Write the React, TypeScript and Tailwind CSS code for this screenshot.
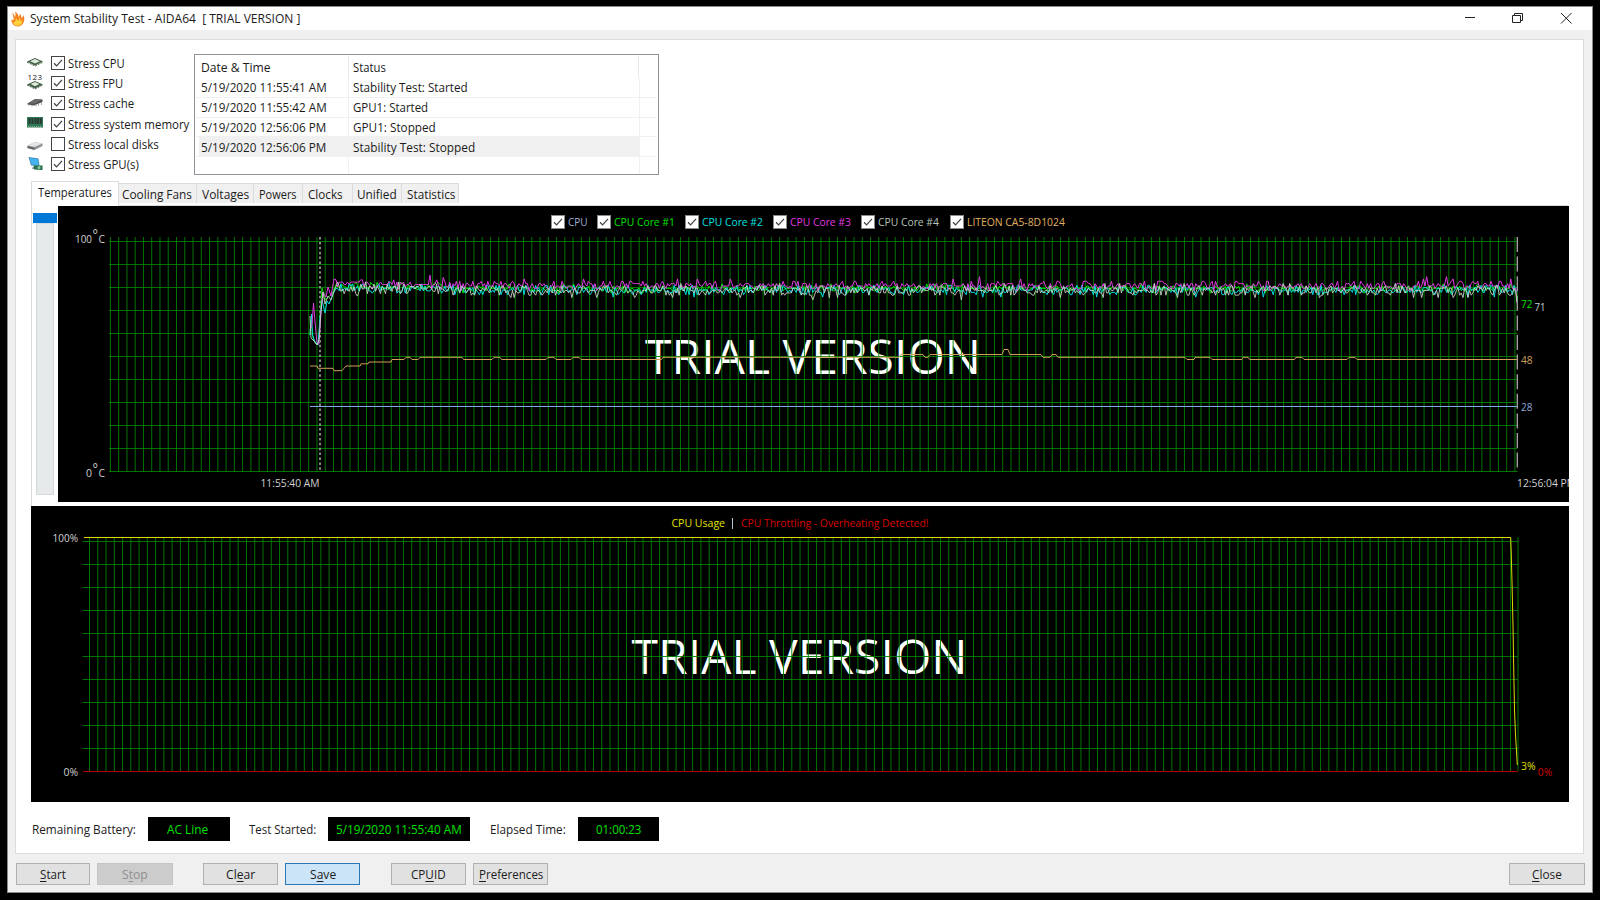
import { useLayoutEffect, useRef, type ReactNode } from "react";

/* ---------- text fitted to a fixed advance width ---------- */

function Fit({ w, children, className = "" }: { w: number; children: ReactNode; className?: string }) {
  const inner = useRef<HTMLSpanElement>(null);
  useLayoutEffect(() => {
    const el = inner.current;
    if (el && el.offsetWidth > 0) el.style.transform = `scaleX(${w / el.offsetWidth})`;
  }, [w]);
  return (
    <span className={`inline-block shrink-0 overflow-visible whitespace-pre text-left ${className}`} style={{ width: w }}>
      <span ref={inner} className="inline-block origin-left whitespace-pre">
        {children}
      </span>
    </span>
  );
}

function Label({
  x,
  y,
  w,
  size = 11,
  fill = "#d0d0d0",
  children,
}: {
  x: number;
  y: number;
  w: number;
  size?: number;
  fill?: string;
  children: string;
}) {
  return (
    <text x={x} y={y} fontSize={size} fill={fill} textLength={w} lengthAdjust="spacingAndGlyphs">
      {children}
    </text>
  );
}

/* ---------- icons ---------- */

function Flame() {
  return (
    <svg width="14" height="16" viewBox="0 0 14 16">
      <path d="M1 1.5C3 3 3.6 4.500 4 6 4.800 4.500 4.600 2.500 4 0.500 6.500 2 7.500 4 7.600 6 8.500 5 8.800 4 8.700 2.800 10.200 4.200 10.600 5.500 10.400 7 11.500 6.300 12.300 5.200 12.600 4 13.600 7 13.800 10 12 12.500 10.500 14.800 8.500 15.700 6.300 15.500 3.500 15.300 1.800 13.500 1 11.500 0.600 10.400 0.300 9.300 0.300 8.200 1.200 9 1.900 9.300 2.600 9.300 2.600 6.500 2.300 4 1 1.500Z" fill="#f58220" />
      <path d="M4.500 6.500C6 8 6.500 8.500 6.800 10 7.800 9 8.300 8 8.500 6.500 9.800 8.500 9.800 9.500 9.500 10.500 10.500 10 11 9.500 11.500 8.500 11.600 11.500 10 14.500 7 14.700 4 14.800 2.500 13 2 11.500 3 11.600 3.800 11.200 4.200 10.600 4.800 9.500 4.800 8 4.500 6.500Z" fill="#ffd23e" />
    </svg>
  );
}

function ChipIcon() {
  return (
    <svg width="18" height="18" viewBox="0 0 18 18">
      <path d="M1 7.500 9 4 17 7.500 9 11.500Z" fill="#3f5f45" />
      <path d="M4 7.200 9 5 14 7.200 9 9.500Z" fill="#dfe9dc" />
      <path d="M1 8.200 9 12 17 8.200" fill="none" stroke="#55674f" strokeWidth="1" strokeDasharray="2 1" />
    </svg>
  );
}

function FpuIcon() {
  return (
    <svg width="18" height="18" viewBox="0 0 18 18" className="overflow-visible">
      <text x="1.500" y="6" fontSize="8" fill="#222" textLength="14.500">123</text>
      <path d="M1 10.500 9 7 17 10.500 9 14.500Z" fill="#3f5f45" />
      <path d="M4.500 10 9 8 13.500 10 9 12.300Z" fill="#dfe9dc" />
      <path d="M1 11 9 15 17 11" fill="none" stroke="#55674f" strokeDasharray="2 1" />
    </svg>
  );
}

function CacheIcon() {
  return (
    <svg width="18" height="18" viewBox="0 0 18 18">
      <path d="M1.500 9.500 9 5 16.500 5.500 16.500 8 8 11.500 1.500 10.500Z" fill="#4d4f50" />
      <path d="M2 9.300 9 5.200 16 5.800 8 9.800Z" fill="#6a6c6d" />
      <path d="M3 10.500v1.500M6 11v1.500M10 10.500v2M12.500 9.500v2.500M15.500 8v3" stroke="#9a9a9a" strokeWidth=".9" />
    </svg>
  );
}

function MemoryIcon() {
  return (
    <svg width="18" height="18" viewBox="0 0 18 18">
      <rect x="1" y="2" width="16" height="10.500" fill="#2f7a55" />
      <path d="M3.500 3v6M6.500 3v6M9.500 3v6M12 3v6M14.800 3v6" stroke="#2b3a35" strokeWidth="2.100" />
      <path d="M2 11.500h14" stroke="#7fb08b" strokeWidth="1" strokeDasharray="1 1" />
    </svg>
  );
}

function DiskIcon() {
  return (
    <svg width="18" height="18" viewBox="0 0 18 18">
      <path d="M1.500 10.500 9 7 16.500 8.500V11L8.500 15 1.500 13Z" fill="#8f9294" />
      <path d="M1.500 10.500 9 7 16.500 8.500 8.500 12Z" fill="#e4e5e6" />
      <path d="M1.500 11.200 8.300 12.800v1.900L1.500 13Z" fill="#5e6163" />
    </svg>
  );
}

function GpuIcon() {
  return (
    <svg width="18" height="18" viewBox="0 0 18 18">
      <path d="M2.500 2 12.500 3.500 13.500 11 5 10.500Z" fill="#3f88b8" />
      <path d="M3.500 3 11.800 4.300 12.700 10.200 5.600 9.500Z" fill="#45b2f0" />
      <path d="M6 12.500 9 11.500 11 12.500V14H6Z" fill="#9aa3a8" />
      <path d="M7.500 10.500H16.500V15L8 14.500Z" fill="#25704d" />
      <circle cx="13" cy="12.600" r="1.500" fill="#8cc6a0" />
    </svg>
  );
}

function Check({ on = true, dark = false }: { on?: boolean; dark?: boolean }) {
  return (
    <svg width="14" height="14" viewBox="0 0 14 14" className="shrink-0">
      <rect x=".5" y=".5" width="13" height="13" fill="#fff" stroke={dark ? "#8a8a8a" : "#444"} />
      {on && <path d="M3 7.200 5.600 9.900 11 3.900" fill="none" stroke="#444" strokeWidth="1.300" />}
    </svg>
  );
}

/* ---------- top area ---------- */

const stressItems = [
  { icon: <ChipIcon />, label: "Stress CPU", w: 57, on: true },
  { icon: <FpuIcon />, label: "Stress FPU", w: 55, on: true },
  { icon: <CacheIcon />, label: "Stress cache", w: 66, on: true },
  { icon: <MemoryIcon />, label: "Stress system memory", w: 121, on: true },
  { icon: <DiskIcon />, label: "Stress local disks", w: 91, on: false },
  { icon: <GpuIcon />, label: "Stress GPU(s)", w: 71, on: true },
];

const logRows = [
  { time: "5/19/2020 11:55:41 AM", tw: 126, status: "Stability Test: Started", sw: 115 },
  { time: "5/19/2020 11:55:42 AM", tw: 126, status: "GPU1: Started", sw: 75 },
  { time: "5/19/2020 12:56:06 PM", tw: 125, status: "GPU1: Stopped", sw: 83 },
  { time: "5/19/2020 12:56:06 PM", tw: 125, status: "Stability Test: Stopped", sw: 122, selected: true },
];

function StressList() {
  return (
    <div className="flex w-[168px] flex-col pt-[13px]">
      {stressItems.map((s) => (
        <div key={s.label} className="flex h-[20.2px] items-center">
          <span className="mr-[7px]">{s.icon}</span>
          <Check on={s.on} />
          <Fit w={s.w} className="ml-[3px]">
            {s.label}
          </Fit>
        </div>
      ))}
    </div>
  );
}

function LogTable() {
  return (
    <div className="mt-[14px] flex h-[121px] w-[465px] flex-col border border-[#8f949b] pt-px pr-px pl-px">
      <div className="flex h-[22px] shrink-0 items-center">
        <div className="flex h-full w-[153px] items-center border-r border-[#e8e8e8] pl-[5px]">
          <Fit w={70}>{"Date & Time"}</Fit>
        </div>
        <div className="flex h-full w-[290px] items-center border-r border-[#e8e8e8] pl-[4px]">
          <Fit w={33}>Status</Fit>
        </div>
      </div>
      {logRows.map((r, i) => (
        <div key={i} className="flex h-[19.8px] shrink-0 items-center border-b border-[#f0f0f0] pl-[3px]">
          <div
            className={`flex h-full w-[150px] items-center border-r border-[#f0f0f0] pl-[2px] ${r.selected ? "bg-[#f0f0f0]" : ""}`}
          >
            <Fit w={r.tw}>{r.time}</Fit>
          </div>
          <div
            className={`flex h-full w-[291px] items-center border-r border-[#f0f0f0] pl-[4px] ${r.selected ? "bg-[#f0f0f0]" : ""}`}
          >
            <Fit w={r.sw}>{r.status}</Fit>
          </div>
        </div>
      ))}
      <div className="flex flex-1 pl-[3px]">
        <div className="w-[150px] border-r border-[#f0f0f0]" />
        <div className="w-[291px] border-r border-[#f0f0f0]" />
      </div>
    </div>
  );
}

function Tabs() {
  return (
    <div className="flex h-[25px] items-end pl-[15px]">
      <div className="flex h-[25px] w-[88px] items-start justify-center border-t border-l border-r border-[#dcdcdc] bg-white pt-[1px]">
        <Fit w={74}>Temperatures</Fit>
      </div>
      <div className="flex flex-1 border-b border-[#dcdcdc] pb-[2px]">
        <Tab label="Cooling Fans" w={70} box="w-[78px] pr-[2px]" />
        <Tab label="Voltages" w={47} box="w-[57px]" />
        <Tab label="Powers" w={38} box="w-[49px]" />
        <Tab label="Clocks" w={35} box="w-[50px] pr-[5px]" />
        <Tab label="Unified" w={40} box="w-[49px]" />
        <Tab label="Statistics" w={48} box="w-[57px] pl-[2px]" />
      </div>
      <div className="w-[15px]" />
    </div>
  );
}

function Tab({ label, w, box }: { label: string; w: number; box: string }) {
  return (
    <div className={`flex h-[20px] items-center justify-center border-t border-r border-[#dcdcdc] bg-[#f0f0f0] ${box}`}>
      <Fit w={w}>{label}</Fit>
    </div>
  );
}

/* ---------- chart data ---------- */

function rng(seed: number) {
  let s = seed;
  return () => {
    s = (s * 1664525 + 1013904223) >>> 0;
    return s / 4294967296;
  };
}

const STEP = 2.35;

function trace(seed: number, start: [number, number][], base: number, spread: number, spike: number) {
  const r = rng(seed);
  const pts = start.map(([x, y]) => `${x},${y}`);
  for (let x = 336; x <= 1516; x += 1.65) {
    const settle = x < 450 ? -1.5 : 0;
    let d = Math.round((r() + r() - 1) * spread);
    if (r() < 0.09) d += spike;
    pts.push(`${x.toFixed(1)},${(base + settle + d * STEP).toFixed(1)}`);
  }
  return pts;
}

const core1 = trace(
  11,
  [[310, 335], [311, 320], [313, 338], [316, 344], [319, 343], [320, 315], [322, 288], [325, 300], [328, 297], [331, 295], [334, 290]],
  288.5, 2, 0,
).concat("1517,292", "1517,303");
const core2 = trace(
  27,
  [[310, 335], [311.5, 314], [312.5, 335], [315, 342], [318, 345], [320, 318], [322, 300], [325, 313], [327, 301], [329, 304], [333, 294]],
  290, 2.6, 1,
).concat("1517,292");
const core3 = trace(
  53,
  [[310, 330], [312, 325], [313.5, 303], [315, 322], [317, 343], [319, 344], [321, 310], [323, 292], [326, 297], [328, 287], [331, 296], [334, 279]],
  286, 2.4, -2,
).concat("1517,303");
const core4 = trace(
  91,
  [[310, 316], [311, 338], [314, 341], [317, 345], [319, 340], [321, 312], [323, 292], [325, 304], [328, 296], [331, 300], [334, 291]],
  290.5, 3.2, 1,
).concat("1517,302");

const disk =
  "310,366 317,366 318,368.3 333,368.3 334,370.700 342,370.700 344,368.300 346,366 360,366 361,363.800 368,363.800 369,362 391,362 392,359.500 404,359.500 406,357.300 410,357.300 412,359.500 418,359.500 420,357.300 462,357.300 463.500,359.500 492,359.500 494,357.300 500,357.300 501.500,359.500 546,359.500 548,357.300 554,357.300 556,359.500 571,359.500 573,357.300 579,357.300 581,359.500 661.500,359.500 663,357.300 899,357.300 901,354.500 923,354.500 925,357.300 928,357.300 930,354.500 1002,354.500 1004,349.500 1008,349.500 1010,354.500 1041,354.500 1043,357.300 1050,357.300 1052,354.500 1056,354.500 1058,357.300 1185,357.300 1187,359.500 1194,359.500 1195,357.300 1210,357.300 1212,359.500 1242,359.500 1243,357.300 1248,357.300 1249.500,359.500 1294.500,359.500 1296,357.300 1302,357.300 1304,359.500 1347,359.500 1349,357.300 1355,357.300 1357,359.500 1517,359.500";

const tempV = Array.from({ length: 171 }, (_, i) => 110.4 + i * 8.262);
const tempH = Array.from({ length: 11 }, (_, i) => 241.5 + i * 23);
const cpuV = Array.from({ length: 173 }, (_, i) => 89.5 + i * 8.262).concat(1518);
const cpuH = Array.from({ length: 10 }, (_, i) => 541.5 + i * 23);

/* ---------- charts ---------- */

const legend = [
  { label: "CPU", w: 20, color: "text-[#9fb0d8]", box: "w-[46px]" },
  { label: "CPU Core #1", w: 61, color: "text-[#00e000]", box: "w-[88.3px]" },
  { label: "CPU Core #2", w: 61, color: "text-[#00e0e0]", box: "w-[88.3px]" },
  { label: "CPU Core #3", w: 61, color: "text-[#e038e0]", box: "w-[88.3px]" },
  { label: "CPU Core #4", w: 61, color: "text-[#b8c4b8]", box: "w-[88.3px]" },
  { label: "LITEON CA5-8D1024", w: 98, color: "text-[#e0b060]", box: "w-[114px]" },
];

function TemperatureChart() {
  return (
    <div className="grid h-[296px] w-[1511px] overflow-hidden bg-black">
      <svg className="col-start-1 row-start-1" width="1511" height="296" viewBox="58 206 1511 296">
        <Label x={645} y={374} w={336} size={47} fill="#fff">TRIAL VERSION</Label>
        <g fill="#008000">
          {tempV.map((x) => (
            <rect key={x} x={x - 0.5} y={237} width={1} height={235} fillOpacity={0.9} />
          ))}
          {tempH.map((y) => (
            <rect key={y} x={109} y={y - 0.5} width={1408.5} height={1} fillOpacity={0.9} />
          ))}
        </g>
        <path d="M320 237V472" stroke="#b0b0b0" strokeWidth="1.500" strokeDasharray="2.500 2.400" />
        <path d="M1517.300 237V472" stroke="#a8a8a8" strokeWidth="1.300" strokeDasharray="15 4.600" />
        <g fill="none" strokeWidth="1" strokeLinejoin="round">
          <polyline points={core1.join(" ")} stroke="#00e000" />
          <polyline points={core2.join(" ")} stroke="#00dede" />
          <polyline points={core3.join(" ")} stroke="#e03be0" />
          <polyline points={core4.join(" ")} stroke="#c4d2c4" strokeOpacity=".9" />
          <polyline points={disk} stroke="#d0a058" />
          <path d="M310 406.500H1517" stroke="#86a8e0" />
        </g>
        <Label x={75} y={242.5} w={17}>100</Label>
        <Label x={92.5} y={240} w={5.5} size={14}>°</Label>
        <Label x={98.5} y={242.5} w={6.5}>C</Label>
        <Label x={86} y={476.5} w={6}>0</Label>
        <Label x={92.5} y={474} w={5.5} size={14}>°</Label>
        <Label x={98.5} y={476.5} w={6.5}>C</Label>
        <Label x={260.5} y={487} w={59}>11:55:40 AM</Label>
        <Label x={1517} y={487} w={59}>12:56:04 PM</Label>
        <Label x={1521} y={308} w={11.5} fill="#00e000">72</Label>
        <Label x={1534.5} y={310.5} w={11} fill="#c4d2d4">71</Label>
        <Label x={1521} y={364} w={11.5} fill="#d0a058">48</Label>
        <Label x={1521} y={411} w={11.5} fill="#8fa8d8">28</Label>
      </svg>
      <div className="col-start-1 row-start-1 flex h-[14px] pt-[9px] pl-[492.500px] text-[11px]">
        {legend.map((l) => (
          <div key={l.label} className={`flex h-[14px] shrink-0 items-center gap-[3px] ${l.color} ${l.box}`}>
            <Check dark />
            <Fit w={l.w}>{l.label}</Fit>
          </div>
        ))}
      </div>
    </div>
  );
}

function CpuChart() {
  return (
    <svg className="bg-black" width="1538" height="296" viewBox="31 506 1538 296">
      <Label x={631.5} y={674} w={336} size={47} fill="#fff">TRIAL VERSION</Label>
      <g fill="#008000" fillOpacity=".9">
        {cpuV.map((x) => (
          <rect key={x} x={x - 0.5} y={537} width={1} height={234} />
        ))}
        {cpuH.map((y) => (
          <rect key={y} x={82.5} y={y - 0.5} width={1435.5} height={1} />
        ))}
      </g>
      <path d="M83 771.500H1518" stroke="#b00000" />
      <path
        d="M84 537.500H1510.700L1511.200 552 1512 582 1513 626 1513.800 673 1514.500 710 1515.500 735 1516.300 748 1517.300 765"
        fill="none"
        stroke="#dcdc00"
      />
      <Label x={671.5} y={526.5} w={53.5} fill="#e0e000">CPU Usage</Label>
      <path d="M732.500 518V529" stroke="#b8c4cc" />
      <Label x={741} y={526.5} w={187.5} fill="#d80000">CPU Throttling - Overheating Detected!</Label>
      <Label x={52.5} y={542} w={25.5}>100%</Label>
      <Label x={63.5} y={776} w={14.5}>0%</Label>
      <Label x={1521} y={769.5} w={14.5} fill="#e0e000">3%</Label>
      <Label x={1537.8} y={776} w={14.5} fill="#d00000">0%</Label>
    </svg>
  );
}

/* ---------- bottom ---------- */

function Readout({ box, w, children }: { box: string; w: number; children: string }) {
  return (
    <div className={`flex h-[24px] items-center justify-center bg-black text-[#00e000] ${box}`}>
      <Fit w={w}>{children}</Fit>
    </div>
  );
}

function Button({ box, w, tone = "normal", children }: { box: string; w: number; tone?: string; children: ReactNode }) {
  const look =
    tone === "active"
      ? "border-[#2b78b8] bg-[#cce4f7]"
      : tone === "disabled"
        ? "border-[#c4c4c4] bg-[#cccccc] text-[#8f8f8f]"
        : "border-[#b0b0b0] bg-[#e1e1e1]";
  return (
    <button className={`flex h-[22px] shrink-0 items-center justify-center border ${look} ${box}`}>
      <Fit w={w}>{children}</Fit>
    </button>
  );
}

function Key({ children }: { children: string }) {
  return <span className="underline underline-offset-2">{children}</span>;
}

export default function App() {
  return (
    <div className="h-[900px] w-[1600px] overflow-hidden bg-black pt-[6px] pl-[7px] font-['Open_Sans','Noto_Sans',sans-serif] text-[13px] leading-[18px] text-[#1c1c1c]">
      <div className="flex h-[887px] w-[1586px] flex-col border border-[#8a8a8a] bg-[#f0f0f0]">
        <header className="flex h-[23px] items-center bg-white pl-[3px]">
          <Flame />
          <Fit w={270.5} className="mb-[2px] ml-[5px]">
            {"System Stability Test - AIDA64  [ TRIAL VERSION ]"}
          </Fit>
          <svg className="mr-[7px] ml-auto" width="130" height="23" viewBox="1455 7 130 23" fill="none" stroke="#222" strokeWidth="1">
            <path d="M1465 17.500H1475" />
            <path d="M1512.500 15.500H1520.500V22.500H1512.500ZM1514.500 15V13.500H1522.500V20.500H1521" />
            <path d="M1561 13 1571.500 23.500M1571.500 13 1561 23.500" />
          </svg>
        </header>
        <main className="mt-[9px] ml-[7px] flex h-[815px] w-[1569px] flex-col border border-[#dcdcdc] bg-white">
          <div className="flex h-[141px] pl-[10px]">
            <StressList />
            <LogTable />
          </div>
          <Tabs />
          <div className="ml-[15px] flex h-[300px] border-l border-[#dcdcdc]">
            <div className="flex w-[26px] flex-col items-center pt-[7px]">
              <div className="h-[10px] w-[24px] bg-[#0078d7]" />
              <div className="h-[272px] w-[18px] border border-[#d6d9db] bg-[#e6eaea]" />
            </div>
            <TemperatureChart />
          </div>
          <div className="ml-[15px]">
            <CpuChart />
          </div>
          <div className="mt-[15px] flex h-[24px] items-center pl-[15.500px]">
            <Fit w={104}>Remaining Battery:</Fit>
            <Readout box="ml-[12px] w-[82px] pr-[2px]" w={41}>AC Line</Readout>
            <Fit w={67} className="ml-[19.500px]">Test Started:</Fit>
            <Readout box="ml-[12px] w-[142px] pr-[1px]" w={126}>5/19/2020 11:55:40 AM</Readout>
            <Fit w={76} className="ml-[20px]">Elapsed Time:</Fit>
            <Readout box="ml-[12px] w-[81px]" w={45}>01:00:23</Readout>
          </div>
        </main>
        <footer className="mt-[9px] flex pl-[8px]">
          <Button box="w-[74px]" w={26}><Key>S</Key>tart</Button>
          <Button box="ml-[7px] w-[76px]" w={26} tone="disabled">S<Key>t</Key>op</Button>
          <Button box="ml-[30px] w-[75px]" w={29}>Cl<Key>e</Key>ar</Button>
          <Button box="ml-[7px] w-[75px]" w={26} tone="active">S<Key>a</Key>ve</Button>
          <Button box="ml-[31px] w-[75px]" w={35}>CP<Key>U</Key>ID</Button>
          <Button box="ml-[7px] w-[75px]" w={64}><Key>P</Key>references</Button>
          <Button box="ml-auto mr-[7px] w-[76px]" w={30}><Key>C</Key>lose</Button>
        </footer>
      </div>
    </div>
  );
}
